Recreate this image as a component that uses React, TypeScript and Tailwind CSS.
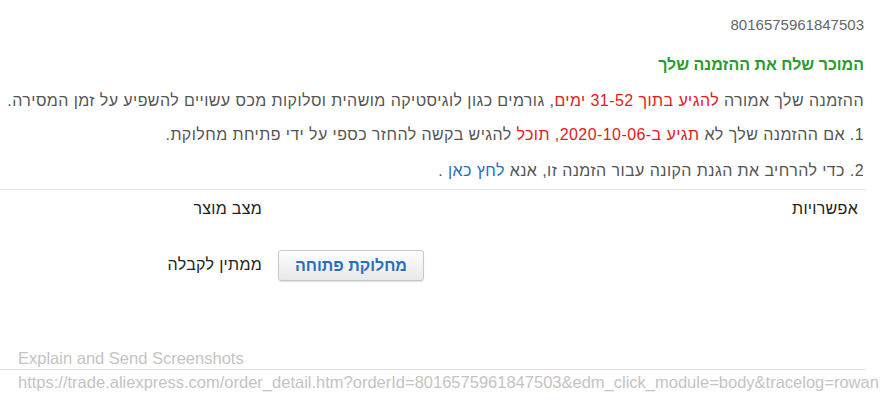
export default function App() {
  return (
    <div className="w-[880px] h-[408px] overflow-hidden bg-white font-['Liberation_Sans',Arial,sans-serif]">
      <div dir="rtl" className="w-[866px] pt-[15px]">
        <div className="pr-[2px] text-[15px] leading-[20px] text-[#666]">8016575961847503</div>

        <div className="mt-[20px] pr-[2px] text-[16px] leading-[20px] font-bold text-[#2c9a2c]">
          המוכר שלח את ההזמנה שלך
        </div>

        <div className="mt-[16px] pr-[2px] text-[16px] tracking-[0.43px] leading-[20px] text-[#555] whitespace-nowrap">
          ההזמנה שלך אמורה <span className="text-[#e02020]">להגיע בתוך 31-52 ימים</span>, גורמים כגון לוגיסטיקה מושהית וסלוקות מכס עשויים להשפיע על זמן המסירה.
        </div>

        <div className="mt-[14px] pr-[2px] text-[16px] tracking-[0.43px] leading-[20px] text-[#555] whitespace-nowrap">
          1. אם ההזמנה שלך לא <span className="text-[#e02020]">תגיע ב-2020-10-06, תוכל</span> להגיש בקשה להחזר כספי על ידי פתיחת מחלוקת.
        </div>

        <div className="mt-[16px] pr-[2px] text-[16px] tracking-[0.43px] leading-[20px] text-[#555] whitespace-nowrap">
          2. כדי להרחיב את הגנת הקונה עבור הזמנה זו, אנא <span className="text-[#2a6ebb]">לחץ כאן</span> .
        </div>

        <div className="mt-[8px] border-t border-[#e6e6e6]" />

        <div className="grid grid-cols-[596px_1fr] text-[16px] tracking-[0.3px] text-[#222]">
          <div className="pr-[8px] pt-[9px] h-[40px] leading-[20px]">אפשרויות</div>
          <div className="pr-[8px] pt-[9px] h-[40px] leading-[20px]">מצב מוצר</div>
          <div className="flex justify-end pl-[8px] pt-[20px]">
            <button className="h-[31px] w-[146px] rounded-[3px] border border-[#c8c8c8] bg-gradient-to-b from-[#fdfdfd] to-[#e9e9e9] text-[16px] tracking-normal font-bold text-[#2a6ebb] shadow-[0_1px_1px_rgba(0,0,0,0.12)]">
              מחלוקת פתוחה
            </button>
          </div>
          <div className="pr-[8px] pt-[25px] leading-[20px]">ממתין לקבלה</div>
        </div>
      </div>

      <div className="mt-[67px] w-[866px]">
        <div className="pl-[18px] text-[16.5px] leading-[20px] text-[#c4c4c4] [text-shadow:1px_1px_0_#fff,-1px_-1px_0_#fff] whitespace-nowrap">
          Explain and Send Screenshots
        </div>
        <div className="mt-[1px] border-t border-[#e3e3e3]" />
        <div className="pl-[18px] pt-[2px] text-[16.5px] leading-[20px] text-[#c4c4c4] [text-shadow:1px_1px_0_#fff,-1px_-1px_0_#fff] whitespace-nowrap">
          https://trade.aliexpress.com/order_detail.htm?orderId=8016575961847503&amp;edm_click_module=body&amp;tracelog=rowan
        </div>
      </div>
    </div>
  );
}
